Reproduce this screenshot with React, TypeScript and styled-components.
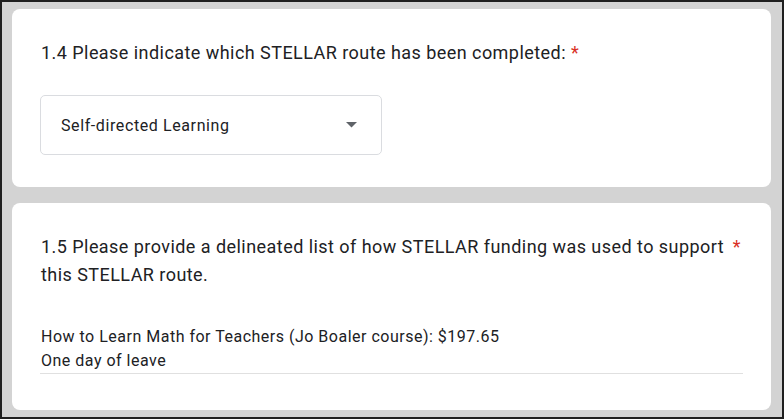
import styled, { createGlobalStyle } from "styled-components";

const GlobalStyle = createGlobalStyle`
  * {
    box-sizing: border-box;
  }
  body {
    margin: 0;
    font-family: Roboto, "Liberation Sans", Arial, sans-serif;
    color: #202124;
  }
`;

const App = () => {
  return (
    <>
      <GlobalStyle />
      <Frame>
        <Card>
          <QuestionTitle>
            <TitleText>
              1.4 Please indicate which STELLAR route has been completed: <Required>*</Required>
            </TitleText>
          </QuestionTitle>
          <Select>
            <SelectValue>Self-directed Learning</SelectValue>
            <Arrow viewBox="0 0 11 6">
              <path d="M0 0 L11 0 L5.5 5.5 Z" fill="#5f6368" />
            </Arrow>
          </Select>
        </Card>

        <Card>
          <QuestionTitle>
            <TitleText>
              1.5 Please provide a delineated list of how STELLAR funding was used to support this STELLAR route.
            </TitleText>
            <Required $side>*</Required>
          </QuestionTitle>
          <Answer>
            How to Learn Math for Teachers (Jo Boaler course): $197.65
            <br />
            One day of leave
          </Answer>
        </Card>
      </Frame>
    </>
  );
};

const Frame = styled.div`
  width: 784px;
  height: 419px;
  background: #d3d3d3;
  border: 2px solid #1f1f1f;
  padding: 7px 11px 0 10px;
  display: flex;
  flex-direction: column;
  gap: 16px;
  overflow: hidden;
`;

const Card = styled.div`
  background: #ffffff;
  border-radius: 8px;
  padding: 30px 28px 32px 28px;
  display: flex;
  flex-direction: column;
`;

const QuestionTitle = styled.div`
  display: flex;
  align-items: flex-start;
  gap: 8px;
  font-size: 18px;
  line-height: 28px;
  letter-spacing: 0.45px;
  color: #202124;
`;

const TitleText = styled.div`
  flex: 1;
  padding-left: 1px;
`;

const Required = styled.span<{ $side?: boolean }>`
  color: #d93025;
  ${(p) => (p.$side ? "padding-right: 2px;" : "")}
`;

const Select = styled.div`
  margin-top: 28px;
  width: 342px;
  height: 60px;
  border: 1px solid #dadce0;
  border-radius: 5px;
  display: flex;
  align-items: center;
  justify-content: space-between;
  padding: 0 24px 0 20px;
`;

const SelectValue = styled.span`
  font-size: 16px;
  letter-spacing: 0.6px;
  color: #202124;
`;

const Arrow = styled.svg`
  width: 11px;
  height: 6px;
`;

const Answer = styled.div`
  margin-top: 36px;
  margin-bottom: 4px;
  font-size: 16px;
  line-height: 24px;
  letter-spacing: 0.5px;
  color: #202124;
  padding-left: 1px;
  border-bottom: 1px solid #e0e0e0;
`;

export default App;
